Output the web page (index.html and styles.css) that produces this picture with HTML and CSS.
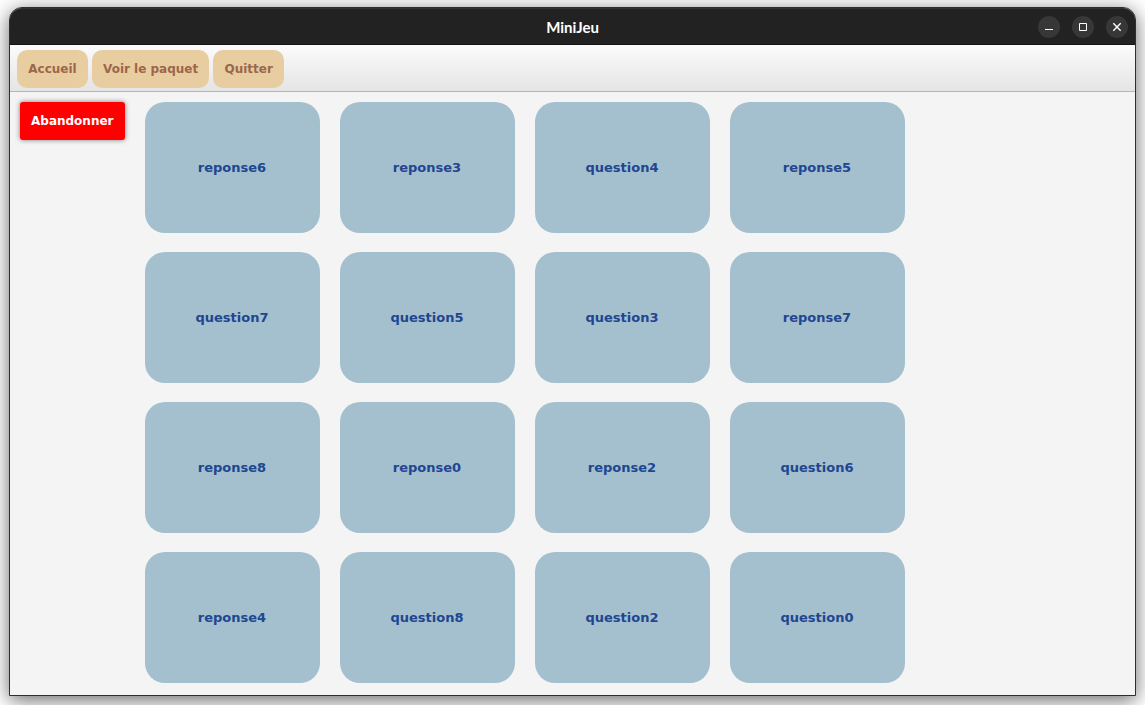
FILE: index.html
```html
<!DOCTYPE html>
<html lang="fr">
<head>
<meta charset="utf-8">
<title>MiniJeu</title>
<link rel="stylesheet" href="styles.css">
</head>
<body>
<div class="window">
  <header class="titlebar">
    <h1 class="title">MiniJeu</h1>
    <div class="controls">
      <button class="control" type="button" aria-label="Réduire"><svg viewBox="0 0 22 22"><path d="M7 13.5h8"/></svg></button>
      <button class="control" type="button" aria-label="Agrandir"><svg viewBox="0 0 22 22"><path d="M7.500 7.500h7v7h-7z"/></svg></button>
      <button class="control" type="button" aria-label="Fermer"><svg viewBox="0 0 22 22"><path class="cross" d="M7.300 7.300l7.400 7.400M14.700 7.300l-7.400 7.400"/></svg></button>
    </div>
  </header>
  <nav class="toolbar">
    <button class="menu-button" type="button">Accueil</button>
    <button class="menu-button" type="button">Voir le paquet</button>
    <button class="menu-button" type="button">Quitter</button>
  </nav>
  <main class="game">
    <button class="quit" type="button">Abandonner</button>
    <div class="board">
      <button class="card" type="button">reponse6</button>
      <button class="card" type="button">reponse3</button>
      <button class="card" type="button">question4</button>
      <button class="card" type="button">reponse5</button>
      <button class="card" type="button">question7</button>
      <button class="card" type="button">question5</button>
      <button class="card" type="button">question3</button>
      <button class="card" type="button">reponse7</button>
      <button class="card" type="button">reponse8</button>
      <button class="card" type="button">reponse0</button>
      <button class="card" type="button">reponse2</button>
      <button class="card" type="button">question6</button>
      <button class="card" type="button">reponse4</button>
      <button class="card" type="button">question8</button>
      <button class="card" type="button">question2</button>
      <button class="card" type="button">question0</button>
    </div>
  </main>
</div>
</body>
</html>
```
FILE: styles.css
```css
* {
  box-sizing: border-box;
}

body {
  margin: 0;
  padding: 7px 9px 9px;
  min-height: 100vh;
  display: flex;
  background: #fff;
  font-family: "DejaVu Sans", sans-serif;
}

button {
  margin: 0;
  border: 0;
  font-family: inherit;
  font-weight: bold;
  white-space: nowrap;
}

.window {
  flex: 1;
  display: flex;
  flex-direction: column;
  border: 1px solid #2e2e2e;
  border-radius: 13px 13px 0 0;
  background: #f4f4f4;
  box-shadow: 0 4px 20px rgba(0, 0, 0, 0.6);
}

.titlebar {
  display: grid;
  grid-template-columns: 1fr auto 1fr;
  align-items: center;
  height: 37px;
  padding: 0 7px;
  background: #222;
  border-top: 1px solid #333;
  border-bottom: 1px solid #141414;
  border-radius: 12px 12px 0 0;
}

.title {
  grid-column: 2;
  margin: 0;
  color: #fff;
  font: bold 15px/20px Lato, sans-serif;
}

.controls {
  display: flex;
  justify-content: flex-end;
  gap: 12px;
}

.control {
  width: 22px;
  height: 22px;
  padding: 0;
  border-radius: 50%;
  background: #373737;
}

.control svg {
  display: block;
  width: 22px;
  height: 22px;
  fill: none;
  stroke: #fff;
  stroke-width: 1;
}

.control .cross {
  stroke-width: 1.4;
}

.toolbar {
  display: flex;
  align-items: flex-start;
  gap: 4px;
  padding: 5px 7px 3px;
  border-bottom: 1px solid #b5b5b5;
  background: linear-gradient(#fbfbfb, #e4e4e4);
}

.menu-button {
  min-width: 71px;
  height: 38px;
  padding: 0 11px;
  border-radius: 10px;
  background: #e8cda0;
  color: #9c664c;
  font-size: 12px;
}

.game {
  flex: 1;
  display: flex;
  align-items: flex-start;
  gap: 20px;
  padding: 10px 10px 12px;
}

.quit {
  height: 38px;
  padding: 0 11px;
  border-radius: 3px;
  background: #f00;
  color: #fff;
  font-size: 12px;
  box-shadow: 0 0 5px rgba(0, 0, 0, 0.5);
}

.board {
  display: grid;
  grid-template-columns: repeat(4, 175px);
  gap: 19px 20px;
}

.card {
  height: 131px;
  padding: 0;
  border-radius: 20px;
  background: #a4bfce;
  color: #1f4690;
  font-size: 13px;
}
```
